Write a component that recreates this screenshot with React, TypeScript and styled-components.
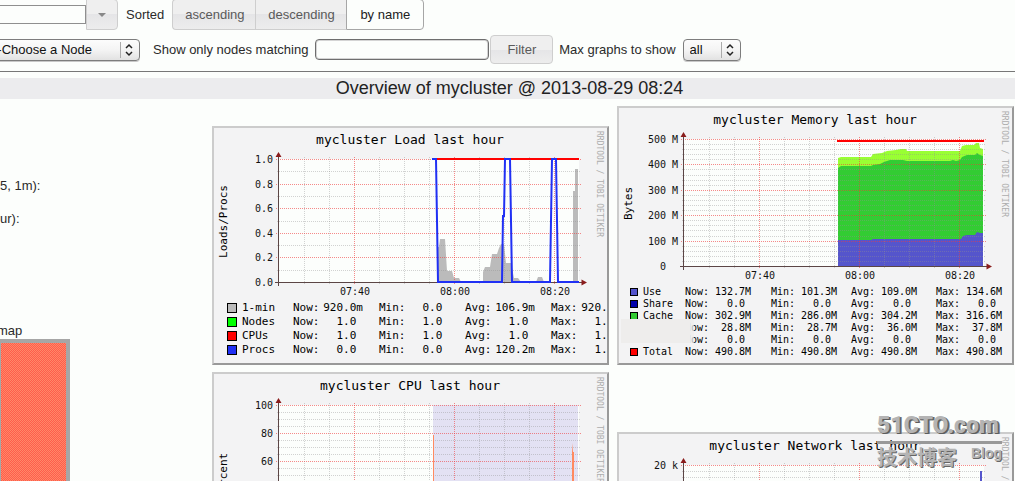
import React from "react";
import styled, { createGlobalStyle } from "styled-components";

const SANS = '"Liberation Sans", Arial, sans-serif';
const MONO = '"DejaVu Sans Mono", monospace';

const GlobalStyle = createGlobalStyle`
  *, *::before, *::after { box-sizing: border-box; }
  html, body { margin: 0; padding: 0; }
  body {
    overflow: hidden;
    background: #fcfefc;
    color: #2a2a2a;
    font: 13px/16px ${SANS};
  }
`;

/* ---------- page ---------- */

const Page = styled.div`
  position: relative;
  min-height: 100vh;
`;

const Toolbar = styled.header`
  display: flex;
  flex-direction: column;
  gap: 5px;
  margin-top: -1px;
  padding-bottom: 7px;
  border-bottom: 1px solid #777;
`;

const ToolRow = styled.div`
  display: flex;
  align-items: center;
  white-space: nowrap;
`;

const ToolLabel = styled.label<{ $before: number; $after: number }>`
  margin: 0 ${(p) => p.$after}px 0 ${(p) => p.$before}px;
`;

const DateInput = styled.input`
  width: 100px;
  height: 19px;
  margin: 0 0 0 -14px;
  border: 1px solid #8f8f8f;
  background: #fcfefc;
`;

const Button = styled.button<{ $active?: boolean; $shape?: "start" | "middle" | "end" | "full" }>`
  height: ${(p) => (p.$shape === "full" ? 29 : 31)}px;
  margin: 0;
  padding: 0 ${(p) => (p.$shape === "full" ? 16 : 12)}px;
  border: 1px solid ${(p) => (p.$active ? "#a6a6a6" : "#cecece")};
  border-right-width: ${(p) => (p.$shape === "start" || p.$shape === "middle" ? 0 : 1)}px;
  border-radius: ${(p) =>
    ({ start: "4px 0 0 4px", middle: "0", end: "0 4px 4px 0", full: "4px" })[p.$shape || "full"]};
  background: ${(p) =>
    p.$active ? "#fcfefc" : "linear-gradient(#efefef 0 50%, #e5e5e7 50%, #ededed 100%)"};
  color: ${(p) => (p.$active ? "#212121" : "#5a5a5a")};
  font: 13px/16px ${SANS};
`;

const DropButton = styled(Button)`
  display: flex;
  align-items: center;
  justify-content: center;
  width: 32px;
  padding: 0;
`;

const ButtonSet = styled.div`
  display: grid;
  grid-template-columns: 83px 91px 78px;
`;

const SelectBox = styled.span<{ $width: number; $pull?: number }>`
  position: relative;
  display: inline-flex;
  width: ${(p) => p.$width}px;
  height: 22px;
  margin-left: ${(p) => p.$pull || 0}px;

  svg {
    position: absolute;
    top: 2px;
    right: 1px;
    pointer-events: none;
  }
`;

const Select = styled.select`
  appearance: none;
  width: 100%;
  height: 22px;
  padding: 0 20px 0 6px;
  border: 1px solid #7d7d7d;
  border-radius: 4px;
  background: linear-gradient(#fcfcfc, #f4f4f4 50%, #e2e2e2);
  box-shadow: 0 1px 0 #c8c8c8;
  color: #111;
  font: 13px/16px ${SANS};
`;

const TextInput = styled.input`
  width: 174px;
  height: 21px;
  margin: 0 1px 0 0;
  border: 1px solid #6e6e6e;
  border-radius: 4px;
  background: #fcfefc;
  box-shadow: inset 0 0 0 1px #d4d4d4;
`;

const TitleBar = styled.h1`
  margin: 6px 0 7px;
  padding-left: 4px;
  background: #ececee;
  color: #222;
  font: 18px/21px ${SANS};
  text-align: center;
`;

const Main = styled.main`
  display: grid;
  grid-template-columns: 212px minmax(0, 1fr);
  padding-right: 1px;
`;

const Sidebar = styled.aside`
  display: flex;
  flex-direction: column;
  padding-top: 72px;
`;

const SideLine = styled.p<{ $after: number }>`
  margin: 0 0 ${(p) => p.$after}px;
`;

const HeatMap = styled.figure`
  width: 73px;
  margin: 0 0 0 -3px;
`;

const HeatCell = styled.div`
  height: 180px;
  border: 4px solid #a6a6a6;
  background: repeating-conic-gradient(#ff5c4c 0 25%, #ff8868 0 50%) 0 0 / 2px 2px;
`;

const Graphs = styled.section`
  display: grid;
  grid-template-columns: repeat(2, minmax(0, 1fr));
  align-items: end;
  gap: 7px 8px;
`;

const Panel = styled.article`
  position: relative;
  overflow: hidden;
  border: 2px solid;
  border-color: #cccccc #999999 #999999 #cccccc;
  background: #f3f3f4;

  > svg { display: block; }
`;

/* ---------- chart text ---------- */

const ChartTitle = styled.text`
  fill: #000;
  font: 13px ${MONO};
  text-anchor: middle;
`;

const Tick = styled.text`
  fill: #111;
  font: 10px ${MONO};
  white-space: pre;
`;

const Unit = styled.text`
  fill: #000;
  font: 11px ${MONO};
  text-anchor: middle;
`;

const Credit = styled.text`
  fill: #adadad;
  font: 8px ${MONO};
`;

/* ---------- legend ---------- */

const LegendTable = styled.table<{ $size: number; $row: number; $left: number; $bottom: number }>`
  table-layout: fixed;
  width: 0;
  margin: 0 0 ${(p) => p.$bottom}px ${(p) => p.$left}px;
  border-collapse: collapse;
  color: #000;
  font: ${(p) => p.$size}px/${(p) => p.$row}px ${MONO};
  white-space: pre;

  td, th {
    height: ${(p) => p.$row}px;
    padding: 0;
    font-weight: normal;
    text-align: left;
  }
`;

const Value = styled.td`
  && { text-align: right; }
`;

const Swatch = styled.span<{ $color: string; $size: number }>`
  display: block;
  width: ${(p) => p.$size}px;
  height: ${(p) => p.$size}px;
  border: 1px solid #000;
  background: ${(p) => p.$color};
`;

const Smudge = styled.div`
  position: absolute;
  top: 211px;
  left: 2px;
  width: 73px;
  height: 24px;
  background: linear-gradient(90deg, #eeedec 94%, rgba(238, 237, 236, 0.6));
`;

/* ---------- watermark ---------- */

const Watermark = styled.div`
  position: absolute;
  top: 412px;
  right: 13px;
  width: 125px;
  color: #b4b4b4;
  font-weight: bold;
  text-shadow: 1px 1px 0 #666;
  white-space: nowrap;
`;

const MarkName = styled.div`
  border-bottom: 3px solid #999;
  font: 900 23px/30px Roboto, sans-serif;
  text-shadow: 1px 1px 0 #5c5c5c, 2px 1px 0 #777;
`;

const MarkSub = styled.div`
  display: flex;
  justify-content: space-between;
  font: bold 20px/26px "Noto Sans CJK SC", sans-serif;
`;

const MarkBlog = styled.span`
  font: bold 14px/18px ${SANS};
`;

/* ---------- pieces ---------- */

function UpDown() {
  return (
    <svg width="20" height="18" viewBox="0 0 20 18" aria-hidden="true">
      <path d="M1.5 1V17" stroke="#aaa" />
      <path d="M7 7 10 4 13 7M7 11 10 14 13 11" fill="none" stroke="#222" strokeWidth="1.500" />
    </svg>
  );
}

const LEFT = 64;
const RIGHT = 365;
const TOP = 31;
const TIMES: [number, string][] = [
  [140, "07:40"],
  [240, "08:00"],
  [340, "08:20"],
];
const COLUMNS = [90, 115, 165, 190, 215, 265, 290, 315];

type ChartProps = {
  title: string;
  unit?: string;
  height: number;
  bottom: number;
  majors: [number, string][];
  minors: number[];
  under?: React.ReactNode;
  over?: React.ReactNode;
};

function Chart({ title, unit, height, bottom, majors, minors, under, over }: ChartProps) {
  return (
    <svg width="393" height={height} viewBox={`0 0 393 ${height}`} role="img" aria-label={title}>
      <ChartTitle x="196" y="16">{title}</ChartTitle>
      <rect x={LEFT} y={TOP} width={RIGHT - LEFT} height={bottom - TOP} fill="#fcfefc" />
      {under}
      <g strokeDasharray="1 1" fill="none">
        <g stroke="#909090" strokeOpacity="0.4">
          {minors.map((y) => <path key={y} d={`M63 ${y + 0.5}H367`} />)}
          {COLUMNS.map((x) => <path key={x} d={`M${x + 0.5} 29V${bottom + 2}`} />)}
        </g>
        <g stroke="#f03c3c" strokeOpacity="0.6">
          {majors.map(([y]) => <path key={y} d={`M62 ${y + 0.5}H368`} />)}
          {TIMES.map(([x]) => <path key={x} d={`M${x + 0.5} 29V${bottom + 3}`} />)}
        </g>
      </g>
      <path d={`M64.500 28V${bottom + 4}M61 ${bottom + 0.5}H369`} stroke="#5b4545" fill="none" />
      <path
        d={`M61.500 29 64.500 24 67.500 29ZM367.500 ${bottom - 2.5} 373 ${bottom + 0.5} 367.500 ${bottom + 3.5}Z`}
        fill="#8a1c1c"
      />
      {over}
      {majors.map(([y, label]) => (
        <Tick key={y} x="59" y={y + 4} textAnchor="end">{label}</Tick>
      ))}
      {TIMES.map(([x, label]) => (
        <Tick key={x} x={x + 1} y={bottom + 13} textAnchor="middle">{label}</Tick>
      ))}
      {unit && <Unit transform={`translate(13 ${(TOP + bottom) / 2 + 1}) rotate(-90)`}>{unit}</Unit>}
      <Credit transform="translate(383 3) rotate(90)">RRDTOOL / TOBI OETIKER</Credit>
    </svg>
  );
}

type LegendRow = { color?: string; name: string; values: string[] };
const KEYS = ["Now:", "Min:", "Avg:", "Max:"];

type LegendProps = {
  rows: LegendRow[];
  widths: number[];
  size: number;
  row: number;
  left: number;
  bottom: number;
  swatch: number;
};

function Legend({ rows, widths, size, row, left, bottom, swatch }: LegendProps) {
  return (
    <LegendTable $size={size} $row={row} $left={left} $bottom={bottom}>
      <colgroup>
        {widths.map((w, i) => <col key={i} style={{ width: w }} />)}
      </colgroup>
      <tbody>
        {rows.map((r, i) => (
          <tr key={i}>
            <td>{r.color && <Swatch $color={r.color} $size={swatch} />}</td>
            <th scope="row">{r.name}</th>
            {KEYS.map((k, n) => (
              <React.Fragment key={k}>
                <td>{k}</td>
                <Value>{r.values[n]}</Value>
                {n < 3 && <td />}
              </React.Fragment>
            ))}
          </tr>
        ))}
      </tbody>
    </LegendTable>
  );
}

const loadRows: LegendRow[] = [
  { color: "#bbbbbb", name: "1-min", values: ["920.0m", "0.0 ", "106.9m", "920.0m"] },
  { color: "#00ff00", name: "Nodes", values: ["1.0 ", "1.0 ", "1.0 ", "1.0 "] },
  { color: "#ff0000", name: "CPUs", values: ["1.0 ", "1.0 ", "1.0 ", "1.0 "] },
  { color: "#2030f4", name: "Procs", values: ["0.0 ", "0.0 ", "120.2m", "1.0 "] },
];

const memoryRows: LegendRow[] = [
  { color: "#5555cc", name: "Use", values: ["132.7M", "101.3M", "109.0M", "134.6M"] },
  { color: "#0000aa", name: "Share", values: ["0.0 ", "0.0 ", "0.0 ", "0.0 "] },
  { color: "#33cc33", name: "Cache", values: ["302.9M", "286.0M", "304.2M", "316.6M"] },
  { name: "", values: ["28.8M", "28.7M", "36.0M", "37.8M"] },
  { name: "", values: ["0.0 ", "0.0 ", "0.0 ", "0.0 "] },
  { color: "#ff0000", name: "Total", values: ["490.8M", "490.8M", "490.8M", "490.8M"] },
];

const memoryMinors = Array.from({ length: 25 }, (_, i) => i)
  .filter((i) => i % 5 !== 0)
  .map((i) => Math.round(158 - i * 5.08));

const cpuMinors = Array.from({ length: 20 }, (_, i) => i)
  .filter((i) => i % 4 !== 0)
  .map((i) => 171 - i * 7);

export default function App() {
  return (
    <Page>
      <GlobalStyle />
      <Toolbar>
        <ToolRow>
          <DateInput type="text" aria-label="Date" />
          <DropButton type="button" $shape="end" aria-label="Pick date">
            <svg width="8" height="4" viewBox="0 0 8 4" aria-hidden="true">
              <path d="M0 0H8L4 4Z" fill="#888" />
            </svg>
          </DropButton>
          <ToolLabel as="span" $before={8} $after={8}>Sorted</ToolLabel>
          <ButtonSet>
            <Button type="button" $shape="start">ascending</Button>
            <Button type="button" $shape="middle">descending</Button>
            <Button type="button" $shape="end" $active>by name</Button>
          </ButtonSet>
        </ToolRow>
        <ToolRow>
          <SelectBox $width={154} $pull={-14}>
            <Select aria-label="Node">
              <option>--Choose a Node</option>
            </Select>
            <UpDown />
          </SelectBox>
          <ToolLabel htmlFor="match" $before={13} $after={7}>Show only nodes matching</ToolLabel>
          <TextInput id="match" type="text" />
          <Button type="button" $shape="full">Filter</Button>
          <ToolLabel htmlFor="max" $before={6} $after={7}>Max graphs to show</ToolLabel>
          <SelectBox $width={58}>
            <Select id="max">
              <option>all</option>
            </Select>
            <UpDown />
          </SelectBox>
        </ToolRow>
      </Toolbar>

      <TitleBar>Overview of mycluster @ 2013-08-29 08:24</TitleBar>

      <Main>
        <Sidebar>
          <SideLine $after={17}>5, 1m):</SideLine>
          <SideLine $after={96}>ur):</SideLine>
          <HeatMap>
            <figcaption>map</figcaption>
            <HeatCell />
          </HeatMap>
        </Sidebar>

        <Graphs>
          <Panel>
            <Chart
              title="mycluster Load last hour"
              unit="Loads/Procs"
              height={173}
              bottom={154}
              majors={[[31, "1.0"], [56, "0.8"], [80, "0.6"], [105, "0.4"], [129, "0.2"], [154, "0.0"]]}
              minors={[43, 68, 93, 117, 142]}
              under={
                <path
                  fill="#bbbbbb"
                  d="M223 154V119H225L226 111H231L233 143H238L240 150H245L247 154ZM269 154V144L271 139H276L278 126H283L285 120L287 116H290L292 135H297L300 150H304L307 154ZM322 154 324 149H328L330 154ZM359 154V63H361V41H364V154Z"
                />
              }
              over={
                <g fill="none" strokeWidth="2">
                  <path d="M218 31H365" stroke="#ff0000" />
                  <path
                    d="M218 31H222L224 154H288L289 88H290L291 31H296L298 154H336L338 31H342L344 154H365"
                    stroke="#2030f4"
                  />
                </g>
              }
            />
            <Legend
              rows={loadRows}
              widths={[15, 51, 28, 42, 16, 28, 42, 16, 28, 42, 16, 28, 42]}
              size={11}
              row={14}
              left={13}
              bottom={6}
              swatch={10}
            />
          </Panel>

          <Panel>
            <Chart
              title="mycluster Memory last hour"
              unit="Bytes"
              height={178}
              bottom={158}
              majors={[[31, "500 M"], [56, "400 M"], [82, "300 M"], [107, "200 M"], [133, "100 M"], [158, "0  "]]}
              minors={memoryMinors}
              under={
                <g>
                  <path
                    fill="#99ff33"
                    d="M219 158V50L222 49H252L254 46 263 45 268 43 277 42 282 41H287L288 43H341L343 38 347 37H355L357 35H360L361 40 364 41V158Z"
                  />
                  <path
                    fill="#33cc33"
                    d="M219 158V60L222 58H252L254 57 261 56 265 54 271 52 284 52 288 53H331L334 52 337 53 341 52 343 49 348 47H356L358 45 361 47 364 48V158Z"
                  />
                  <path
                    fill="#5555cc"
                    d="M219 158V132H252L254 131H342L344 128 348 127H356L358 124 361 125H364V158Z"
                  />
                </g>
              }
              over={<path d="M218 33H365" stroke="#ff0000" strokeWidth="2" />}
            />
            <Legend
              rows={memoryRows}
              widths={[13, 42, 24, 42, 20, 24, 42, 14, 24, 42, 19, 24, 42]}
              size={10}
              row={12}
              left={11}
              bottom={5}
              swatch={8}
            />
            <Smudge />
          </Panel>

          <Panel>
            <Chart
              title="mycluster CPU last hour"
              unit="Percent"
              height={256}
              bottom={171}
              majors={[[31, "100"], [59, "80"], [87, "60"], [115, "40"], [143, "20"], [171, "0"]]}
              minors={cpuMinors}
              under={
                <g>
                  <rect x="219" y="31" width="145" height="140" fill="#e3e1f3" />
                </g>
              }
              over={
                <path
                  fill="#ff8a60"
                  d="M219 171V61H220V171ZM358 171V78L358.500 69 359 78H360V171Z"
                />
              }
            />
          </Panel>

          <Panel>
            <Chart
              title="mycluster Network last hour"
              height={196}
              bottom={151}
              majors={[[31, "20 k"], [91, "10 k"], [151, "0  "]]}
              minors={[37, 43, 49, 55, 61, 67, 73, 79, 85]}
              over={<path d="M362 37V151" stroke="#5555cc" strokeWidth="2" />}
            />
          </Panel>
        </Graphs>
      </Main>

      <Watermark>
        <MarkName>51CTO.com</MarkName>
        <MarkSub>
          技术博客
          <MarkBlog>Blog</MarkBlog>
        </MarkSub>
      </Watermark>
    </Page>
  );
}
